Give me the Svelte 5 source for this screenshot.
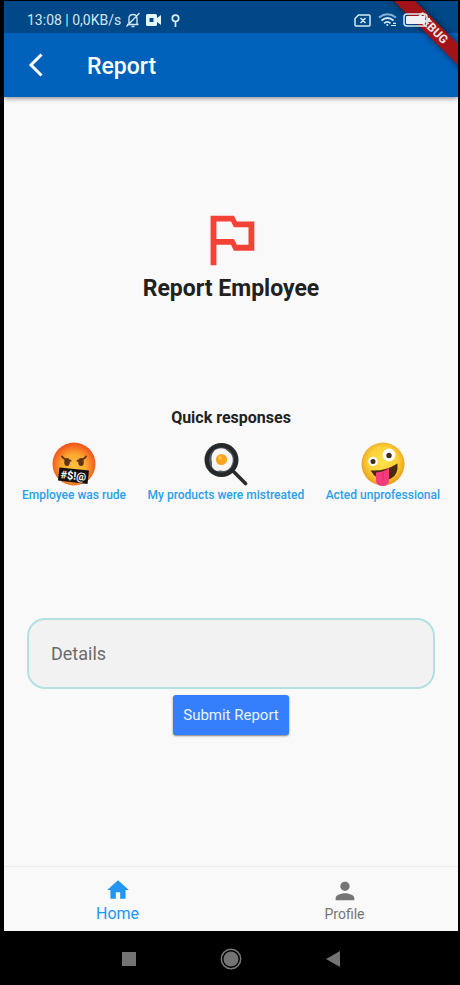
<script>
  let details = $state('');
</script>

<div class="device">
  <div class="screen">
    <header>
      <div class="corner"><span>DEBUG</span></div>
      <div class="status">
        <span class="clock">13:08 | 0,0KB/s</span>
        <svg class="bell" width="16" height="16" viewBox="0 0 16 16" fill="none" stroke="#cfe6ee" stroke-width="1.4">
          <path d="M2 12.500h11.500M4 12V6.500Q4 2.500 8 2.500T12 6.500V12M6.500 14.500h3M14.500 1L1.500 14.500" />
        </svg>
        <svg class="camera" width="15" height="12" viewBox="0 0 15 12">
          <path fill="#e4f5f7" fill-rule="evenodd" d="M1.500 0h8Q11 0 11 1.500V4l4-3v10l-4-3v2.500Q11 12 9.500 12h-8Q0 12 0 10.500v-9Q0 0 1.500 0zM3.500 4v4h4V4z" />
        </svg>
        <svg class="pin" width="9" height="13" viewBox="0 0 9 13" fill="none" stroke="#d9eef2" stroke-width="1.700">
          <circle cx="4.500" cy="4.300" r="3.200" /><path d="M4.500 7.500V13" />
        </svg>
        <span class="fill"></span>
        <svg class="sim" width="17" height="13" viewBox="0 0 17 13" fill="none" stroke="#d6ebf5" stroke-width="1.500">
          <path d="M4.500 1H15Q16 1 16 2v9q0 1-1 1H2q-1 0-1-1V4.500zM6.500 4l5 5M11.500 4l-5 5" />
        </svg>
        <svg class="wifi" width="19" height="14" viewBox="0 0 19 14" fill="none" stroke="#d6ebf5" stroke-width="1.800">
          <path d="M1 4.500Q9.500-2 18 4.500" stroke="#86b3d6" /><path d="M3.500 7.500Q9.500 2.500 15.500 7.500M6 10.300Q9.500 7.500 12.500 10.300" />
          <circle cx="9.300" cy="12" r="1" fill="#d6ebf5" stroke="none" /><path d="M13 12.500h5M15 10.300h3" stroke-width="1.200" />
        </svg>
        <svg class="battery" width="27" height="14" viewBox="0 0 27 14">
          <rect x="1" y="1" width="23" height="12" rx="3" fill="none" stroke="#d6ebf5" stroke-width="1.500" />
          <rect x="3" y="3" width="19" height="8" rx="1" fill="#f0f0f5" /><path d="M26 5v4" stroke="#d6ebf5" stroke-width="2" />
        </svg>
      </div>
      <div class="bar">
        <button class="back" aria-label="Back">
          <svg width="16" height="24" viewBox="0 0 16 24" fill="none" stroke="#fff" stroke-width="3"><path d="M13.500 1.500L3 12l10.500 10.500" /></svg>
        </button>
        <h1>Report</h1>
      </div>
    </header>

    <main>
      <svg class="flag" width="70" height="70" viewBox="0 0 24 24" fill="#f44336">
        <path d="M14 6l-1-2H5v17h2v-7h5l1 2h7V6h-6zm4 8h-4l-1-2H7V6h5l1 2h5v6z" />
      </svg>
      <h2>Report Employee</h2>
      <h3>Quick responses</h3>
      <div class="quick">
        <button>
          <svg width="44" height="44" viewBox="0 0 44 44">
            <defs><radialGradient id="angry" cx=".5" cy=".55" r=".52"><stop offset="0" stop-color="#fdc23c" /><stop offset=".55" stop-color="#fba62f" /><stop offset="1" stop-color="#f2581c" /></radialGradient></defs>
            <circle cx="22" cy="22" r="21.500" fill="url(#angry)" />
            <g fill="#60321a"><ellipse cx="15" cy="20" rx="2.800" ry="4" /><ellipse cx="29" cy="20" rx="2.800" ry="4" /></g>
            <path d="M10 14.500q3 4 8.500 4.200M34 14.500q-3 4-8.500 4.200" fill="none" stroke="#60321a" stroke-width="1.900" stroke-linecap="round" />
            <path d="M7.500 25.500L37 28.500 35.500 42 6 38.500z" fill="#111" />
            <text x="21.500" y="37.500" text-anchor="middle" transform="rotate(5 21.500 33)" fill="#fff" font-size="11" font-weight="700">#$!@</text>
          </svg>
          <span>Employee was rude</span>
        </button>
        <button>
          <svg width="44" height="44" viewBox="0 0 44 44">
            <path d="M29 29L41.500 41.500" stroke="#292b2d" stroke-width="3.600" stroke-linecap="round" />
            <circle cx="17.500" cy="18" r="17" fill="#25292b" /><circle cx="17.500" cy="18" r="12.500" fill="#51575b" />
            <path d="M11 8q5-3 10-1 3 2 6 5 3 5 1 10-2 6-8 7-4-1-7 0-6-2-5-8-2-8 3-13z" fill="#f7f6f5" />
            <circle cx="17.500" cy="17.500" r="5.600" fill="#f8a51d" /><circle cx="16" cy="16" r="1.800" fill="#ffc74e" />
          </svg>
          <span>My products were mistreated</span>
        </button>
        <button>
          <svg width="44" height="44" viewBox="0 0 44 44">
            <defs><radialGradient id="zany" cx=".5" cy=".45" r=".53"><stop offset="0" stop-color="#ffe24a" /><stop offset=".65" stop-color="#fbd038" /><stop offset="1" stop-color="#eba021" /></radialGradient></defs>
            <circle cx="22" cy="22" r="21.500" fill="url(#zany)" />
            <circle cx="12" cy="19.500" r="4.700" fill="#fff" /><circle cx="28" cy="13" r="6.400" fill="#fff" />
            <circle cx="12" cy="19.500" r="2.500" fill="#422b1a" /><circle cx="28" cy="13.500" r="2.700" fill="#422b1a" />
            <path d="M9.500 28.500Q24 29.500 36.500 21.500 37.500 32.500 30 36.500 17 41 9.500 28.500z" fill="#49290f" />
            <path d="M15 30.500q8-.5 13-4.500v12q0 6-6 6-7 0-7-6z" fill="#f63b7d" /><path d="M22 30v8" stroke="#d52a65" stroke-width="1" />
          </svg>
          <span>Acted unprofessional</span>
        </button>
      </div>
      <input class="details" aria-label="Details" placeholder="Details" bind:value={details} />
      <button class="submit">Submit Report</button>
    </main>

    <nav>
      <a class="active" href="#home">
        <svg width="26" height="26" viewBox="0 0 24 24" fill="currentColor"><path d="M10 20v-6h4v6h5v-8h3L12 3 2 12h3v8z" /></svg>
        <span>Home</span>
      </a>
      <a href="#profile">
        <svg width="28" height="28" viewBox="0 0 24 24" fill="currentColor"><path d="M12 12c2.210 0 4-1.790 4-4s-1.790-4-4-4-4 1.790-4 4 1.790 4 4 4zm0 2c-2.670 0-8 1.340-8 4v2h16v-2c0-2.660-5.330-4-8-4z" /></svg>
        <span>Profile</span>
      </a>
    </nav>
  </div>

  <div class="system">
    <button aria-label="Recent apps"><svg width="22" height="22" viewBox="0 0 22 22"><path d="M4 4h14v14H4z" fill="#737373" /></svg></button>
    <button aria-label="Home screen"><svg width="22" height="22" viewBox="0 0 22 22"><circle cx="11" cy="11" r="9.700" fill="none" stroke="#777" stroke-width="1.500" /><circle cx="11" cy="11" r="7.500" fill="#737373" /></svg></button>
    <button aria-label="Go back"><svg width="22" height="22" viewBox="0 0 22 22"><path d="M18 3v16L4 11z" fill="#737373" /></svg></button>
  </div>
</div>

<style>
  :global(body) { margin: 0; background: #000; }
  .device {
    box-sizing: border-box;
    min-height: 100vh;
    display: flex;
    flex-direction: column;
    padding: 1px 2px 0 4px;
    background: #000;
    font-family: Roboto, "Liberation Sans", sans-serif;
  }
  .screen { flex: 1; display: flex; flex-direction: column; background: #f9f9f9; }
  button { border: 0; padding: 0; margin: 0; background: none; font: inherit; cursor: pointer; }
  svg { display: block; flex: none; }
  header {
    position: relative;
    background: linear-gradient(#004888 32px, #0061bb 32px);
    box-shadow: 0 1px 5px rgba(0, 0, 0, .5);
  }
  .status {
    position: relative;
    display: flex;
    align-items: center;
    height: 32px;
    padding: 6px 28px 0 23px;
    box-sizing: border-box;
    color: #d3e6ee;
  }
  .clock { font-size: 14px; margin-right: 4px; }
  .bell { margin-right: 5px; }
  .camera { margin-right: 10px; }
  .fill { flex: 1; }
  .sim { margin-right: 7px; }
  .wifi { margin-right: 6px; }
  .bar { display: flex; align-items: center; height: 64px; padding-left: 24px; }
  .back { width: 59px; }
  h1 { margin: 0; color: #fff; font-size: 23px; line-height: 28px; font-weight: 500; padding-top: 4px; }
  .corner { position: absolute; top: 0; right: 0; width: 80px; height: 80px; overflow: hidden; pointer-events: none; }
  .corner span {
    position: absolute;
    top: 20px;
    right: -34px;
    width: 120px;
    transform: rotate(45deg);
    background: #a11318;
    box-shadow: 0 0 6px rgba(0, 0, 0, .6);
    color: #f3e6e6;
    font-size: 12px;
    line-height: 15px;
    font-weight: 700;
    text-align: center;
  }
  main { flex: 1; display: flex; flex-direction: column; align-items: center; padding-top: 107px; }
  h2 { margin: 0; color: #212121; font-size: 23px; line-height: 30px; font-weight: 700; }
  h3 { margin: 104px 0 0; color: #212121; font-size: 16px; line-height: 20px; font-weight: 700; }
  .quick { align-self: stretch; display: flex; justify-content: space-between; margin: 14px 18px 0; }
  .quick button { display: flex; flex-direction: column; align-items: center; }
  .quick span { color: #2b9fea; font-size: 12px; line-height: 18px; font-weight: 500; white-space: nowrap; }
  .details {
    align-self: stretch;
    height: 71px;
    box-sizing: border-box;
    margin: 114px 23px 6px;
    padding: 0 22px;
    border: 2px solid #b4e0e1;
    border-radius: 18px;
    background: #f2f2f2;
    color: #212121;
    font: 400 18px Roboto, sans-serif;
    outline: none;
  }
  .details::placeholder { color: #6b6b6b; opacity: 1; }
  .submit {
    padding: 0 10px;
    border-radius: 3px;
    background: #367ffc;
    box-shadow: 0 1px 2px rgba(0, 0, 0, .5);
    color: #e9f3fd;
    font-size: 15px;
    line-height: 40px;
  }
  nav { display: flex; border-top: 1px solid #ececec; }
  nav a {
    flex: 1;
    display: flex;
    flex-direction: column;
    align-items: center;
    justify-content: flex-end;
    height: 64px;
    padding-bottom: 8px;
    box-sizing: border-box;
    color: #757575;
    font-size: 14px;
    line-height: 18px;
    text-decoration: none;
  }
  nav .active { color: #2196f3; font-size: 16px; }
  nav .active svg { margin-bottom: 2px; }
  .system { display: flex; justify-content: center; gap: 80px; padding: 17px 0 15px; }
</style>
